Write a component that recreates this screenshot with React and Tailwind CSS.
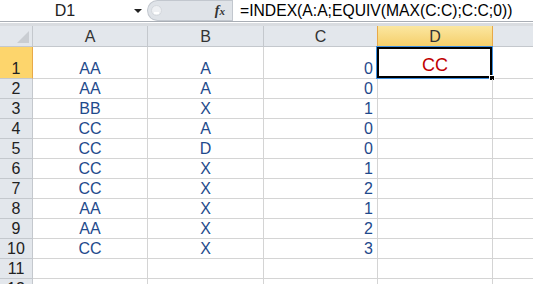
import React from "react";

const rows = [
  ["AA", "A", "0", "CC"],
  ["AA", "A", "0", ""],
  ["BB", "X", "1", ""],
  ["CC", "A", "0", ""],
  ["CC", "D", "0", ""],
  ["CC", "X", "1", ""],
  ["CC", "X", "2", ""],
  ["AA", "X", "1", ""],
  ["AA", "X", "2", ""],
  ["CC", "X", "3", ""],
  ["", "", "", ""],
  ["", "", "", ""],
];

const grid = "grid grid-cols-[33px_115px_116px_114px_115px_1fr]";

export default function App() {
  return (
    <div
      className="w-[533px] h-[284px] overflow-hidden bg-white text-[16px]"
      style={{ fontFamily: "'Liberation Sans', Arial, sans-serif" }}
    >
      {/* Formula bar */}
      <div className="flex h-[22px] border-b border-[#a9aeb5] bg-white">
        <div className="w-[128px] flex items-center justify-center text-[#222] leading-none pl-[2px]">D1</div>
        <div className="w-[19px] flex items-center justify-center">
          <div className="w-0 h-0 border-l-[4px] border-r-[4px] border-t-[4px] border-l-transparent border-r-transparent border-t-[#222]" />
        </div>
        <div className="w-[85px] flex items-center rounded-l-full bg-[#dfe3e8] border-t border-b border-l border-[#c2c7ce]">
          <div className="ml-[3px] w-[11px] h-[11px] rounded-full bg-[#eef0f3] border border-[#d4d8dd] flex items-end justify-center">
            <div className="w-[5px] h-[2px] bg-white mb-[1px]" />
          </div>
          <div className="flex-1" />
          <div
            className="pr-[7px] italic font-bold text-[#333] text-[14px] leading-none"
            style={{ fontFamily: "'Liberation Serif', 'Times New Roman', serif" }}
          >
            f<span className="text-[11px]">x</span>
          </div>
        </div>
        <div className="flex-1 flex items-center pl-[7px] border-l border-[#c2c7ce] text-[15.7px] text-black whitespace-nowrap leading-none">
          =INDEX(A:A;EQUIV(MAX(C:C);C:C;0))
        </div>
      </div>
      <div className="h-[1px] bg-white" />
      <div className="h-[3px] bg-[#d9dce0]" />

      {/* Column headers */}
      <div className={`${grid} h-[21px]`}>
        <div className="relative bg-[#e3e7ec] border-r border-b border-[#c4c8cd]">
          <svg className="absolute right-[3px] bottom-[3px]" width="12" height="12" viewBox="0 0 12 12">
            <polygon points="12,0 12,12 0,12" fill="#c9cdd2" />
          </svg>
        </div>
        {["A", "B", "C"].map((c) => (
          <div
            key={c}
            className="bg-[#e3e7ec] border-r border-b border-[#c4c8cd] flex items-end justify-center text-[#333] leading-[19px]"
          >
            {c}
          </div>
        ))}
        <div className="bg-gradient-to-b from-[#fbe7a0] to-[#f5cf6a] border-r border-l border-b border-[#e8a948] flex items-end justify-center text-[#333] leading-[19px] -ml-[1px]">
          D
        </div>
        <div className="bg-[#e3e7ec] border-b border-[#c4c8cd]" />
      </div>

      {/* Rows */}
      {rows.map((r, i) => {
        const first = i === 0;
        const h = first ? "h-[32px]" : "h-[20px]";
        return (
          <div key={i} className={`${grid} ${h}`}>
            <div
              className={`${
                first
                  ? "bg-[#fdd56c] border-r border-[#e8a948] border-b border-b-[#c4c8cd]"
                  : "bg-[#e3e7ec] border-r border-b border-[#c4c8cd]"
              } flex items-end justify-center text-[#222] leading-[19px]`}
            >
              {i + 1}
            </div>
            <div className="border-r border-b border-[#d4d4d4] flex items-end justify-center text-[#1f4a8c] leading-[19px]">
              {r[0]}
            </div>
            <div className="border-r border-b border-[#d4d4d4] flex items-end justify-center text-[#1f4a8c] leading-[19px]">
              {r[1]}
            </div>
            <div className="border-r border-b border-[#d4d4d4] flex items-end justify-end pr-[4px] text-[#1f4a8c] leading-[19px]">
              {r[2]}
            </div>
            <div className="relative border-r border-b border-[#d4d4d4] flex items-end justify-center leading-[21px]">
              {first && (
                <>
                  <div className="absolute -left-[2px] -top-[1px] -right-[1px] -bottom-[1px] border border-[#3d8fe0]" />
                  <div className="absolute -left-[1px] top-0 right-0 bottom-0 border-2 border-black" />
                  <div className="absolute -right-[3px] -bottom-[3px] w-[6px] h-[6px] bg-black border border-white" />
                  <span className="relative text-[18px] text-[#c00000] pb-[2px]">{r[3]}</span>
                </>
              )}
            </div>
            <div className="border-b border-[#d4d4d4]" />
          </div>
        );
      })}
    </div>
  );
}
